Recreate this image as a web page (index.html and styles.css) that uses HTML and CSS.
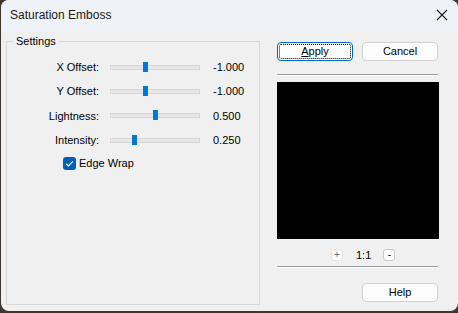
FILE: index.html
```html
<!DOCTYPE html>
<html>
<head>
<meta charset="utf-8">
<link rel="stylesheet" href="styles.css">
</head>
<body>
<div class="window">
  <div class="titlebar">
    <span class="title">Saturation Emboss</span>
    <svg class="close" width="12" height="12" viewBox="0 0 12 12"><path d="M1 1 L11 11 M11 1 L1 11" stroke="#1b1b1b" stroke-width="1.1" fill="none"/></svg>
  </div>
  <div class="content">
    <fieldset class="group">
      <legend>Settings</legend>
      <div class="rows">
        <div class="row">
          <span class="lbl">X Offset:</span>
          <div class="track"><span class="thumb" style="left:32px"></span></div>
          <span class="val">-1.000</span>
        </div>
        <div class="row">
          <span class="lbl">Y Offset:</span>
          <div class="track"><span class="thumb" style="left:32px"></span></div>
          <span class="val">-1.000</span>
        </div>
        <div class="row">
          <span class="lbl">Lightness:</span>
          <div class="track"><span class="thumb" style="left:42px"></span></div>
          <span class="val">0.500</span>
        </div>
        <div class="row">
          <span class="lbl">Intensity:</span>
          <div class="track"><span class="thumb" style="left:21px"></span></div>
          <span class="val">0.250</span>
        </div>
      </div>
      <label class="check">
        <span class="box"><svg width="13" height="13" viewBox="0 0 13 13"><path d="M3.2 6.8 L5.5 9 L9.8 4.3" stroke="#fff" stroke-width="1.2" fill="none"/></svg></span>
        <span>Edge Wrap</span>
      </label>
    </fieldset>
    <div class="side">
      <div class="btnrow">
        <button class="btn focused"><span class="u">A</span>pply</button>
        <button class="btn">Cancel</button>
      </div>
      <div class="sep first"></div>
      <div class="preview"></div>
      <div class="zoomrow">
        <span class="zbtn dis">+</span>
        <span class="ratio">1:1</span>
        <span class="zbtn">-</span>
      </div>
      <div class="sep second"></div>
      <button class="btn help">Help</button>
    </div>
  </div>
</div>
</body>
</html>
```

FILE: styles.css
```css
html, body {
  margin: 0;
  padding: 0;
}
body {
  background: #3e3731;
  width: 458px;
  height: 313px;
  overflow: hidden;
  font-family: "Liberation Sans", Arial, sans-serif;
  font-size: 11px;
  color: #000;
}
.window {
  margin-left: 1px;
  width: 457px;
  height: 311px;
  background: #f0f0f0;
  border-radius: 8px;
  overflow: hidden;
  display: flex;
  flex-direction: column;
}
.titlebar {
  height: 31px;
  flex: none;
  display: flex;
  align-items: center;
  justify-content: space-between;
  padding: 0 9px 2px 9px;
  box-sizing: border-box;
  background: #eff2f6;
}
.title {
  font-size: 12px;
  color: #1a1a1a;
}
.close {
  margin-right: 1px;
  margin-top: 1px;
}
.content {
  display: flex;
  padding: 4px 0 0 5px;
}
.group {
  margin: 0;
  padding: 0;
  width: 254px;
  height: 270px;
  box-sizing: border-box;
  border: 1px solid #d7d7d7;
  min-width: 0;
}
.group legend {
  margin-left: 7px;
  padding: 0 2px;
  line-height: 13px;
  font-size: 11px;
  color: #000;
}
.rows {
  padding-top: 7px;
}
.row {
  display: grid;
  grid-template-columns: 92px 90px auto;
  column-gap: 11px;
  align-items: center;
  height: 24.3px;
}
.lbl {
  text-align: right;
  color: #000;
}
.val {
  margin-left: 2px;
}
.track {
  position: relative;
  height: 5px;
  box-sizing: border-box;
  background: #e7e7e7;
  border: 1px solid #d6d6d6;
}
.thumb {
  position: absolute;
  top: -4px;
  width: 5px;
  height: 10px;
  background: #0078d7;
}
.check {
  display: flex;
  align-items: center;
  gap: 3px;
  margin: 4px 0 0 56px;
  height: 14px;
}
.box {
  width: 13px;
  height: 13px;
  background: #005fb8;
  border-radius: 3px;
  display: block;
}
.box svg {
  display: block;
}
.check span:last-child {
  font-size: 11px;
}
.side {
  width: 161px;
  margin-left: 17px;
  margin-top: 7px;
  display: flex;
  flex-direction: column;
}
.btnrow {
  display: flex;
  gap: 9px;
}
.btn {
  width: 76px;
  height: 19px;
  box-sizing: border-box;
  background: #fdfdfd;
  border: 1px solid #d0d0d0;
  border-radius: 4px;
  font-family: "Liberation Sans", Arial, sans-serif;
  font-size: 11px;
  color: #000;
  padding: 0;
  line-height: 17px;
}
.btn.focused {
  border: 1px solid #0067c0;
  outline: 1px dotted #000;
  outline-offset: -3px;
}
.u {
  text-decoration: underline;
}
.sep {
  height: 1px;
  background: #a0a0a0;
  border-bottom: 1px solid #fff;
}
.sep.first {
  margin-top: 13px;
}
.preview {
  margin-top: 6px;
  width: 162px;
  height: 157px;
  background: #000;
}
.zoomrow {
  display: flex;
  align-items: center;
  height: 12px;
  margin-top: 10px;
  padding-left: 54px;
}
.zbtn {
  width: 12px;
  height: 12px;
  box-sizing: border-box;
  border: 1px solid #c8c8c8;
  border-radius: 3px;
  background: #fdfdfd;
  display: flex;
  align-items: center;
  justify-content: center;
  font-size: 10px;
  line-height: 10px;
}
.zbtn.dis {
  border-color: #e4e4e4;
  color: #707070;
}
.ratio {
  margin: 0 12px 0 13px;
  font-size: 11px;
}
.sep.second {
  margin-top: 5px;
}
.help {
  margin-top: 15px;
  align-self: flex-end;
}
```
